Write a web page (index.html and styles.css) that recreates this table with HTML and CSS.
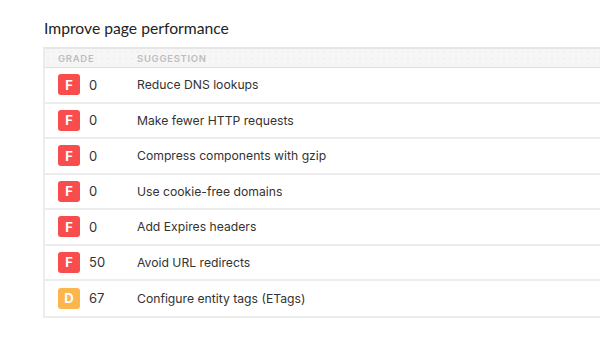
FILE: index.html
```html
<!DOCTYPE html>
<html lang="en">
<head>
    <meta charset="UTF-8">
    <title>Improve page performance</title>
    <link rel="stylesheet" href="styles.css">
</head>
<body>
    <div class="panel">
        <h2>Improve page performance</h2>

        <div class="grades">
            <div class="head">
                <span class="col-grade">Grade</span>
                <span>Suggestion</span>
            </div>

            <div class="row">
                <div class="col-grade"><span class="badge f">F</span><span class="score">0</span></div>
                <span class="text">Reduce DNS lookups</span>
            </div>
            <div class="row">
                <div class="col-grade"><span class="badge f">F</span><span class="score">0</span></div>
                <span class="text">Make fewer HTTP requests</span>
            </div>
            <div class="row">
                <div class="col-grade"><span class="badge f">F</span><span class="score">0</span></div>
                <span class="text">Compress components with gzip</span>
            </div>
            <div class="row">
                <div class="col-grade"><span class="badge f">F</span><span class="score">0</span></div>
                <span class="text">Use cookie-free domains</span>
            </div>
            <div class="row">
                <div class="col-grade"><span class="badge f">F</span><span class="score">0</span></div>
                <span class="text">Add Expires headers</span>
            </div>
            <div class="row">
                <div class="col-grade"><span class="badge f">F</span><span class="score">50</span></div>
                <span class="text">Avoid URL redirects</span>
            </div>
            <div class="row">
                <div class="col-grade"><span class="badge d">D</span><span class="score">67</span></div>
                <span class="text">Configure entity tags (ETags)</span>
            </div>
        </div>
    </div>
</body>
</html>
```

FILE: styles.css
```css
body {
    margin: 0;
    background: #fff;
    font-family: Inter, "Noto Sans", sans-serif;
    color: #333;
    overflow: hidden;
}

.panel {
    padding: 18px 0 0 43px;
}

.panel h2 {
    margin: 0 0 9px 1px;
    font-family: Lato, "Open Sans", sans-serif;
    font-weight: 400;
    font-size: 15.7px;
    line-height: 20px;
    color: #222;
}

.grades {
    width: 557px;
    border: 2px solid #ececec;
    border-right: none;
    border-top: 2px solid #e6e6e6;
}

.head {
    display: flex;
    align-items: center;
    height: 18px;
    padding-left: 13px;
    background-color: #f6f6f6;
    background-image: radial-gradient(#e9e9e9 0.6px, transparent 0.8px);
    background-size: 6px 6px;
    border-bottom: 1px solid #dedede;
    font-size: 9.5px;
    font-weight: 600;
    letter-spacing: 0.7px;
    text-transform: uppercase;
    color: #bdbdbd;
}

.col-grade {
    width: 79px;
    display: flex;
    align-items: center;
    flex-shrink: 0;
}

.row {
    display: flex;
    align-items: center;
    height: 33.5px;
    padding-left: 13px;
    border-bottom: 2px solid #ececec;
    font-size: 12.2px;
}

.row:last-child {
    border-bottom: none;
    height: 34.5px;
}

.badge {
    width: 22px;
    height: 21px;
    border-radius: 3px;
    display: flex;
    align-items: center;
    justify-content: center;
    color: #fff;
    font-weight: 700;
    font-size: 13px;
    margin-right: 9px;
}

.badge.f {
    background-color: #f94d4d;
}

.badge.d {
    background-color: #fdb64b;
}

.score {
    color: #333;
    font-size: 13px;
}

.text {
    color: #333;
}
```
